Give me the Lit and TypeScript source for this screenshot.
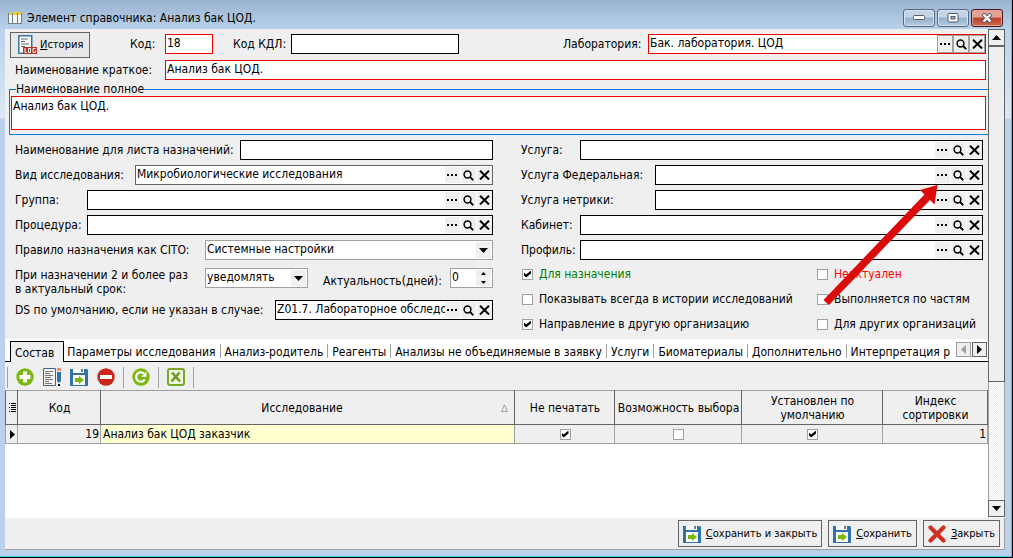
import { LitElement, html, css, nothing } from "lit";
import { customElement, state } from "lit/decorators.js";
import { classMap } from "lit/directives/class-map.js";

type Field = { id: string; label: string; size: string; value?: string; kind?: string; tone?: string };

const LEFT: Field[] = [
  { id: "list-name", label: "Наименование для листа назначений:", size: "w225", kind: "plain" },
  { id: "type", label: "Вид исследования:", size: "w120", value: "Микробиологические исследования", tone: "gray" },
  { id: "group", label: "Группа:", size: "w72" },
  { id: "procedure", label: "Процедура:", size: "w72" },
];
const RIGHT: Field[] = [
  { id: "service", label: "Услуга:", size: "w59" },
  { id: "service-fed", label: "Услуга Федеральная:", size: "w134" },
  { id: "service-net", label: "Услуга нетрики:", size: "w134" },
  { id: "room", label: "Кабинет:", size: "w59" },
  { id: "profile", label: "Профиль:", size: "w59" },
];
const CHECKS = [
  { id: "c1", label: "Для назначения", on: true, tone: "green" },
  { id: "c2", label: "Неактуален", on: false, tone: "red" },
  { id: "c3", label: "Показывать всегда в истории исследований", on: false, tone: "" },
  { id: "c4", label: "Выполняется по частям", on: false, tone: "" },
  { id: "c5", label: "Направление в другую организацию", on: true, tone: "" },
  { id: "c6", label: "Для других организаций", on: false, tone: "" },
];
const TABS = [
  "Состав", "Параметры исследования", "Анализ-родитель", "Реагенты",
  "Анализы не объединяемые в заявку", "Услуги", "Биоматериалы", "Дополнительно", "Интерпретация р",
];

const dots = html`<svg width="11" height="3" viewBox="0 0 11 3"><path d="M0 0h2v2H0zM4 0h2v2H4zM8 0h2v2H8z" /></svg>`;
const lens = html`<svg width="11" height="11" viewBox="0 0 11 11"><circle cx="4.5" cy="4.5" r="3.4" fill="none" stroke="#000" stroke-width="1.5" /><path d="M6.6 7.6l1-1 3 3-1 1z" stroke="#000" stroke-width=".6" /></svg>`;
const cross = html`<svg width="11" height="10" viewBox="0 0 11 10"><path d="M1 .8l9 8.6M10 .8L1 9.4" stroke="#000" stroke-width="2" /></svg>`;
const tri = (d: string, fill = "#000", w = 9, h = 9) =>
  html`<svg width=${w} height=${h} viewBox="0 0 ${w} ${h}"><path d=${d} fill=${fill} /></svg>`;

const floppy = html`<svg width="18" height="18" viewBox="0 0 18 18">
  <path d="M0 1h17l1 1v16H0z" fill="#2f73ab" /><path d="M3 1h11v4H3z" fill="#fff" /><path d="M11 1h2v3h-2z" fill="#777" />
  <path d="M3 7h12v10H3z" fill="#fff" /><path d="M5 10h4V8l5 4-5 4v-2H5z" fill="#7db700" /></svg>`;
const plus = html`<svg width="18" height="18" viewBox="0 0 18 18"><circle cx="9" cy="9" r="8.7" fill="#7db713" />
  <path d="M7 3.500h4V7h3.500v4H11v3.500H7V11H3.500V7H7z" fill="#fff" /></svg>`;
const minus = html`<svg width="18" height="18" viewBox="0 0 18 18"><circle cx="9" cy="9" r="8.7" fill="#c8281c" />
  <path d="M3 7h12v4H3z" fill="#fff" /></svg>`;
const edit = html`<svg width="19" height="18" viewBox="0 0 19 18">
  <path d="M.5.5h12v17H.5z" fill="#f4f4f4" stroke="#45647c" /><path d="M2 3.500h8M2 5.500h5M2 7.500h8M2 9.500h6M2 11.500h8M2 13.500h4M2 15.500h7" stroke="#777" />
  <path d="M14 0h4v3h-4z" fill="#ec8f80" /><path d="M14 4h4v9l-2 2-2-2z" fill="#2f73ab" /><path d="M15 16h2v2h-2z" fill="#000" /></svg>`;
const refresh = html`<svg width="18" height="18" viewBox="0 0 18 18"><circle cx="9" cy="9" r="8.7" fill="#7db713" />
  <path d="M12.800 11.500A4.700 4.700 0 1 1 12 5.600" fill="none" stroke="#fff" stroke-width="2.2" /><path d="M14.500 3.500v5.300H9.200z" fill="#fff" /></svg>`;
const excel = html`<svg width="18" height="18" viewBox="0 0 18 18"><rect x="1" y="1" width="16" height="16" rx="2" fill="#f1f6e4" stroke="#7aa728" stroke-width="2" />
  <path d="M5 4.500l8 9M12.500 4.500l-8 9" stroke="#6a9b1f" stroke-width="2.6" /></svg>`;
const redX = html`<svg width="18" height="18" viewBox="0 0 18 18"><path d="M2.500 2.500l13 13M15.500 2.500l-13 13" stroke="#cf2f1e" stroke-width="4.2" stroke-linecap="round" /></svg>`;
const logIcon = html`<svg width="20" height="20" viewBox="0 0 20 20">
  <path d="M.75.75h13v17.500H.75z" fill="#fff" stroke="#3a75a8" stroke-width="1.500" />
  <path d="M3 4h7M3 6.500h4M3 9h8M3 11.500h4" stroke="#666" />
  <path d="M5 12h14v7H5z" fill="#b83222" />
  <path d="M7 13v4.500h2M10.500 13.500h2v4h-2zM17.500 13.500h-2.500v4h2.500v-2" fill="none" stroke="#fff" /></svg>`;
const appIcon = html`<svg width="14" height="12" viewBox="0 0 14 12">
  <path d="M0 1h14v11H0z" fill="#6e7f8e" /><path d="M1 3h3v8H1zM5 3h4v8H5zM10 3h3v8h-3z" fill="#fbfbf5" />
  <path d="M1 0h3v3H1zM5 0h4v3H5zM10 0h3v3h-3z" fill="#f2cf3a" /></svg>`;

@customElement("app-root")
export class AppRoot extends LitElement {
  @state() private tab = 0;

  static styles = css`
    :host { display: block; height: 100vh; min-height: 540px; color: #000;
      font: 12px/14px "DejaVu Sans Condensed", "Noto Sans", sans-serif; }
    * { box-sizing: border-box; }
    svg { display: block; flex: none; }
    button, input, select, textarea { font: inherit; color: inherit; margin: 0; border-radius: 0; }
    button { padding: 0; border: 0; background: #efefef; display: flex; align-items: center; justify-content: center; flex: none; }
    .window { height: 100%; display: flex; flex-direction: column; padding: 0 7px 7px 5px;
      border-right: 1px solid #000; border-bottom: 1px solid #000; box-shadow: inset -1px -1px 0 #2fd0ea;
      background: linear-gradient(#99b4d1 0, #b9d1ea 29px, #dde8f5 118px, #b9d1ea 119px); }
    .title { flex: none; height: 29px; display: flex; align-items: center; gap: 5px; padding: 6px 2px 0 3px; }
    .title h1 { flex: 1; margin: 0; font-size: 12px; font-weight: 400; white-space: nowrap; }
    .caps { display: flex; gap: 2px; }
    .cap { width: 32px; height: 18px; border: 1px solid #56687e; border-radius: 3px;
      background: linear-gradient(#c3d4e6 0 45%, #94afcd 50%, #b4cbe3); box-shadow: inset 0 0 0 1px #d3e1f0; }
    .cap.close { border-color: #4b1820; background: linear-gradient(#e2a397 0 45%, #b93f2b 50%, #cf6a50); box-shadow: inset 0 0 0 1px #dea497; }
    .client { flex: 1; min-height: 0; display: flex; flex-direction: column; background: #efefef;
      border-right: 1px solid #a0a0a0; border-bottom: 1px solid #a0a0a0; }
    .scroll { flex: 1; min-height: 0; display: flex; }
    .page { flex: 1; min-width: 0; display: flex; flex-direction: column; position: relative; }

    .top { display: flex; align-items: flex-start; padding: 3px 2px 0 5px; }
    .history { width: 80px; height: 26px; border: 1px solid #646464; background: #e8e8e8; gap: 2px; justify-content: flex-start; padding-left: 7px; font-size: 11px; }
    .top .field { margin-top: 2px; }
    .field { display: flex; align-items: center; min-width: 0; height: 20px; white-space: nowrap; }
    .field label { flex: none; }
    .code { margin-left: 40px; }
    .code label { width: 35px; }
    .code .box { width: 48px; }
    .kdl { margin-left: 20px; }
    .kdl label { width: 58px; }
    .kdl .box { width: 168px; }
    .lab { margin-left: auto; }
    .lab label { width: 85px; }
    .lab .box { width: 338px; }
    .short { margin: 2px 2px 0 10px; }
    .short label { width: 150px; }

    .box { flex: 1; min-width: 0; height: 20px; display: flex; align-items: stretch; border: 1px solid #000; background: #fff; }
    .box.red { border-color: #f00000; }
    .box.gray { border-color: #646464; }
    .box.soft { border-color: #a0a0a0; }
    .box input, .box select { flex: 1; min-width: 0; width: 0; border: 0; outline: 0; padding: 0 0 2px 1px; background: none; appearance: none; }
    .box input[type="number"]::-webkit-inner-spin-button { display: none; }
    .tools { display: flex; gap: 1px; padding: 1px 0; }
    .tools button { width: 15px; }
    .lab .tools { gap: 0; padding: 0; }
    .lab .tools button { width: 16px; border: 1px solid #a0a0a0; }
    .drop { width: 15px; margin: 1px; pointer-events: none; background: #efefef; display: flex; align-items: center; justify-content: center; }
    .spin { display: flex; flex-direction: column; gap: 1px; padding: 1px; }
    .spin button { width: 15px; flex: 1; min-height: 0; }

    fieldset { margin: 2px 0 0 4px; padding: 0 2px 4px 1px; border: 1px solid #0078d7; border-right: 0; min-width: 0; }
    legend { padding: 0; margin-left: 5px; height: 14px; }
    textarea { display: block; width: 100%; height: 34px; border: 1px solid #f00000; resize: none; outline: 0; padding: 2px 1px; background: #fff; }

    .cols { display: grid; grid-template-columns: 478fr 462fr; gap: 28px; padding: 5px 5px 0 10px; }
    .col { display: flex; flex-direction: column; gap: 5px; min-width: 0; }
    .w59 { width: 59px; } .w72 { width: 72px; } .w120 { width: 120px; } .w134 { width: 134px; }
    .w190 { width: 190px; } .w225 { width: 225px; } .w260 { width: 260px; }
    .repeat { display: flex; margin-top: 3px; height: 27px; }
    .repeat .two { width: 190px; flex: none; line-height: 14px; white-space: nowrap; }
    .repeat .notify { flex: 1; }
    .actual { margin-left: 15px; }
    .actual label { width: 127px; padding-top: 6px; }
    .actual .box { width: 43px; }
    .checks { display: grid; grid-template-columns: 295fr 166fr; row-gap: 11px; margin-top: 2px; padding-left: 1px; }
    .check { display: flex; align-items: center; gap: 6px; height: 14px; white-space: nowrap; }
    .green { color: #008000; } .red-text { color: #f00; }
    input[type="checkbox"] { appearance: none; flex: none; width: 11px; height: 11px; border: 1px solid #a0a0a0; background: #fff; display: block; padding: 1px; }
    input[type="checkbox"]:checked::before { content: ""; display: block; width: 7px; height: 7px; background: #000;
      clip-path: polygon(0 28%, 30% 57%, 100% 0, 100% 43%, 30% 100%, 0 71%); }

    .tabs { flex: none; display: flex; align-items: flex-end; height: 23px; margin-top: 8px; padding-left: 5px; background: #fff; border-bottom: 1px solid #000; }
    .tab { height: 19px; padding: 0 5px 0 4px; margin-right: -1px; background: none; white-space: nowrap; position: relative; border-right: 1px solid transparent; }
    .tab::after { content: ""; position: absolute; right: 0; top: 2px; height: 14px; width: 1px; background: #a0a0a0; }
    .tab.on { height: 21px; margin-bottom: -1px; padding: 1px 9px 0 4px; background: #efefef; border: 1px solid #000; border-bottom: 0; }
    .tab.on::after, .tab.last::after { display: none; }
    .pager { margin-left: auto; display: flex; gap: 1px; padding: 0 1px 4px 0; }
    .pager button { width: 15px; height: 15px; border: 1px solid #646464; }
    .pager .off { border-color: #a0a0a0; }
    .bar { flex: none; height: 28px; display: flex; align-items: center; gap: 7px; padding: 2px 0 0 2px; }
    .bar button { width: 20px; height: 20px; background: none; }
    .bar i { width: 1px; height: 21px; background: #a0a0a0; }

    .grid { flex: 1; min-height: 0; background: #fff; overflow: hidden; }
    table { width: 100%; border-collapse: collapse; table-layout: fixed; background: #efefef; }
    td, th { padding: 0 1px 0 2px; font-weight: 400; border: 1px solid #a0a0a0; white-space: nowrap; }
    th { height: 34px; border-color: #a0a0a0 #646464 #646464; white-space: normal; }
    td { height: 19px; }
    td.num { text-align: right; }
    td.name { background: #ffffcf; }
    td input[type="checkbox"] { margin: 0 auto; }
    .c0 { width: 12px; } .c1 { width: 83px; } .c3 { width: 100px; } .c4 { width: 127px; } .c5 { width: 141px; } .c6 { width: 105px; }
    th .sort { display: flex; align-items: center; justify-content: center; }
    th .sort span { flex: 1; }
    th .sort svg { margin-right: 5px; }
    th svg, td svg { margin: 0 auto; }

    .track { flex: none; width: 17px; margin-right: -1px; display: flex; flex-direction: column;
      background: repeating-conic-gradient(#fff 0 25%, #ececec 0 50%) 0 0 / 2px 2px; padding-bottom: 1px; }
    .track button { height: 17px; border: 1px solid #646464; width: 17px; }
    .thumb { flex: 0 0 336px; border: 1px solid #646464; background: #efefef; }
    .space { flex: 1; border-left: 1px solid #a0a0a0; border-right: 1px solid #a0a0a0; }

    .footer { flex: none; height: 31px; display: flex; justify-content: flex-end; gap: 6px; padding: 2px 4px 2px 0; font-size: 11px; }
    .footer button { height: 27px; border: 1px solid #646464; padding: 0 4px; gap: 5px; }
    .arrow { position: absolute; right: 50px; top: 155px; pointer-events: none; }
  `;

  private tools(id: string) {
    return html`<span class="tools">
      <button type="button" aria-label="Выбрать" aria-controls=${id}>${dots}</button>
      <button type="button" aria-label="Найти" aria-controls=${id}>${lens}</button>
      <button type="button" aria-label="Очистить" aria-controls=${id}>${cross}</button>
    </span>`;
  }

  private field(f: Field) {
    return html`<div class="field">
      <label class=${f.size} for=${f.id}>${f.label}</label>
      <span class="box ${f.tone ?? ""}"><input id=${f.id} type="text" .value=${f.value ?? ""} />${f.kind === "plain" ? nothing : this.tools(f.id)}</span>
    </div>`;
  }

  render() {
    return html`<div class="window">
      <header class="title">
        ${appIcon}
        <h1>Элемент справочника: Анализ бак ЦОД.</h1>
        <div class="caps">
          <button class="cap" aria-label="Свернуть"><svg width="12" height="6" viewBox="0 0 12 6"><rect x=".5" y=".5" width="11" height="4" rx="1" fill="#fff" stroke="#555c68" /></svg></button>
          <button class="cap" aria-label="Развернуть"><svg width="12" height="10" viewBox="0 0 12 10"><rect x="1" y=".5" width="10" height="8.5" rx="1" fill="#fff" stroke="#555c68" /><rect x="4" y="3.5" width="4" height="2.5" fill="#9bb6d4" stroke="#555c68" /></svg></button>
          <button class="cap close" aria-label="Закрыть окно"><svg width="12" height="10" viewBox="0 0 12 10"><path d="M2 1l8 8M10 1L2 9" stroke="#555060" stroke-width="4" /><path d="M2.500 1.500l7 7M9.500 1.500l-7 7" stroke="#fff" stroke-width="2.4" /></svg></button>
        </div>
      </header>
      <main class="client">
        <div class="scroll">
          <div class="page">
            <div class="top">
              <button class="history">${logIcon}<span><u>И</u>стория</span></button>
              <div class="field code"><label for="code">Код:</label><span class="box red"><input id="code" type="text" .value=${"18"} /></span></div>
              <div class="field kdl"><label for="kdl">Код КДЛ:</label><span class="box"><input id="kdl" type="text" /></span></div>
              <div class="field lab"><label for="lab">Лаборатория:</label><span class="box red"><input id="lab" type="text" .value=${"Бак. лаборатория. ЦОД"} />${this.tools("lab")}</span></div>
            </div>
            <div class="field short"><label for="short">Наименование краткое:</label><span class="box red"><input id="short" type="text" .value=${"Анализ бак ЦОД."} /></span></div>
            <fieldset>
              <legend>Наименование полное</legend>
              <textarea aria-label="Наименование полное" .value=${"Анализ бак ЦОД."}></textarea>
            </fieldset>
            <div class="cols">
              <div class="col">
                ${LEFT.map((f) => this.field(f))}
                <div class="field"><label class="w190" for="cito">Правило назначения как CITO:</label>
                  <span class="box soft"><select id="cito"><option>Системные настройки</option></select><span class="drop">${tri("M0 2h9L4.5 7z")}</span></span></div>
                <div class="repeat">
                  <label class="two" for="notify">При назначении 2 и более раз<br />в актуальный срок:</label>
                  <span class="box soft notify"><select id="notify"><option>уведомлять</option></select><span class="drop">${tri("M0 2h9L4.5 7z")}</span></span>
                  <div class="field actual"><label for="days">Актуальность(дней):</label>
                    <span class="box soft"><input id="days" type="number" .value=${"0"} />
                      <span class="spin"><button aria-label="Больше">${tri("M0 3l2.5-3L5 3z", "#000", 5, 3)}</button><button aria-label="Меньше">${tri("M0 0h5L2.5 3z", "#000", 5, 3)}</button></span></span></div>
                </div>
                ${this.field({ id: "ds", label: "DS по умолчанию, если не указан в случае:", size: "w260", value: "Z01.7. Лабораторное обследование" })}
              </div>
              <div class="col">
                ${RIGHT.map((f) => this.field(f))}
                <div class="checks">
                  ${CHECKS.map((c) => html`<div class="check ${c.tone === "green" ? "green" : c.tone === "red" ? "red-text" : ""}">
                    <input type="checkbox" id=${c.id} .checked=${c.on} /><label for=${c.id}>${c.label}</label></div>`)}
                </div>
              </div>
            </div>
            <nav class="tabs" role="tablist">
              ${TABS.map((t, i) => html`<button role="tab" aria-selected=${this.tab === i} @click=${() => (this.tab = i)}
                class=${classMap({ tab: true, on: this.tab === i, last: i === TABS.length - 1 })}>${t}</button>`)}
              <div class="pager">
                <button class="off" aria-label="Назад">${tri("M7 0v9L2 4.5z", "#a0a0a0")}</button>
                <button aria-label="Вперёд">${tri("M2 0v9l5-4.5z")}</button>
              </div>
            </nav>
            <div class="bar">
              <i></i><button aria-label="Добавить">${plus}</button><button aria-label="Изменить">${edit}</button>
              <button aria-label="Сохранить запись">${floppy}</button><button aria-label="Удалить">${minus}</button>
              <i></i><button aria-label="Обновить">${refresh}</button><i></i><button aria-label="Excel">${excel}</button><i></i>
            </div>
            <div class="grid">
              <table>
                <colgroup><col class="c0" /><col class="c1" /><col /><col class="c3" /><col class="c4" /><col class="c5" /><col class="c6" /></colgroup>
                <thead><tr>
                  <th><svg width="7" height="9" viewBox="0 0 7 9"><path d="M2 .5h5M2 2.500h5M2 4.500h5M2 6.500h5M2 8.500h5M0 .5h1M0 4.500h1M0 8.500h1" stroke="#000" /></svg></th>
                  <th>Код</th>
                  <th><div class="sort"><span>Исследование</span><svg width="7" height="8" viewBox="0 0 7 8"><path d="M.5 7.500L3.500.8l3 6.700z" fill="none" stroke="#a0a0a0" /></svg></div></th>
                  <th>Не печатать</th><th>Возможность выбора</th><th>Установлен по умолчанию</th><th>Индекс сортировки</th>
                </tr></thead>
                <tbody><tr>
                  <td>${tri("M0 0v9l5-4.5z", "#000", 5, 9)}</td><td class="num">19</td><td class="name">Анализ бак ЦОД заказчик</td>
                  <td><input type="checkbox" aria-label="Не печатать" .checked=${true} /></td>
                  <td><input type="checkbox" aria-label="Возможность выбора" /></td>
                  <td><input type="checkbox" aria-label="Установлен по умолчанию" .checked=${true} /></td>
                  <td class="num">1</td>
                </tr></tbody>
              </table>
            </div>
            <svg class="arrow" width="115" height="121" viewBox="0 0 115 121"><path d="M114.500 1L97 6l4.500 4.500L.5 116l5.500 5L107 16l4.500 4.500z" fill="#d90b0b" /></svg>
          </div>
          <div class="track">
            <button aria-label="Вверх">${tri("M0 7h9L4.5 2z")}</button><div class="thumb"></div><div class="space"></div>
            <button aria-label="Вниз">${tri("M0 2h9L4.5 7z")}</button>
          </div>
        </div>
        <footer class="footer">
          <button>${floppy}<span><u>С</u>охранить и закрыть</span></button>
          <button>${floppy}<span><u>С</u>охранить</span></button>
          <button>${redX}<span><u>З</u>акрыть</span></button>
        </footer>
      </main>
    </div>`;
  }
}
